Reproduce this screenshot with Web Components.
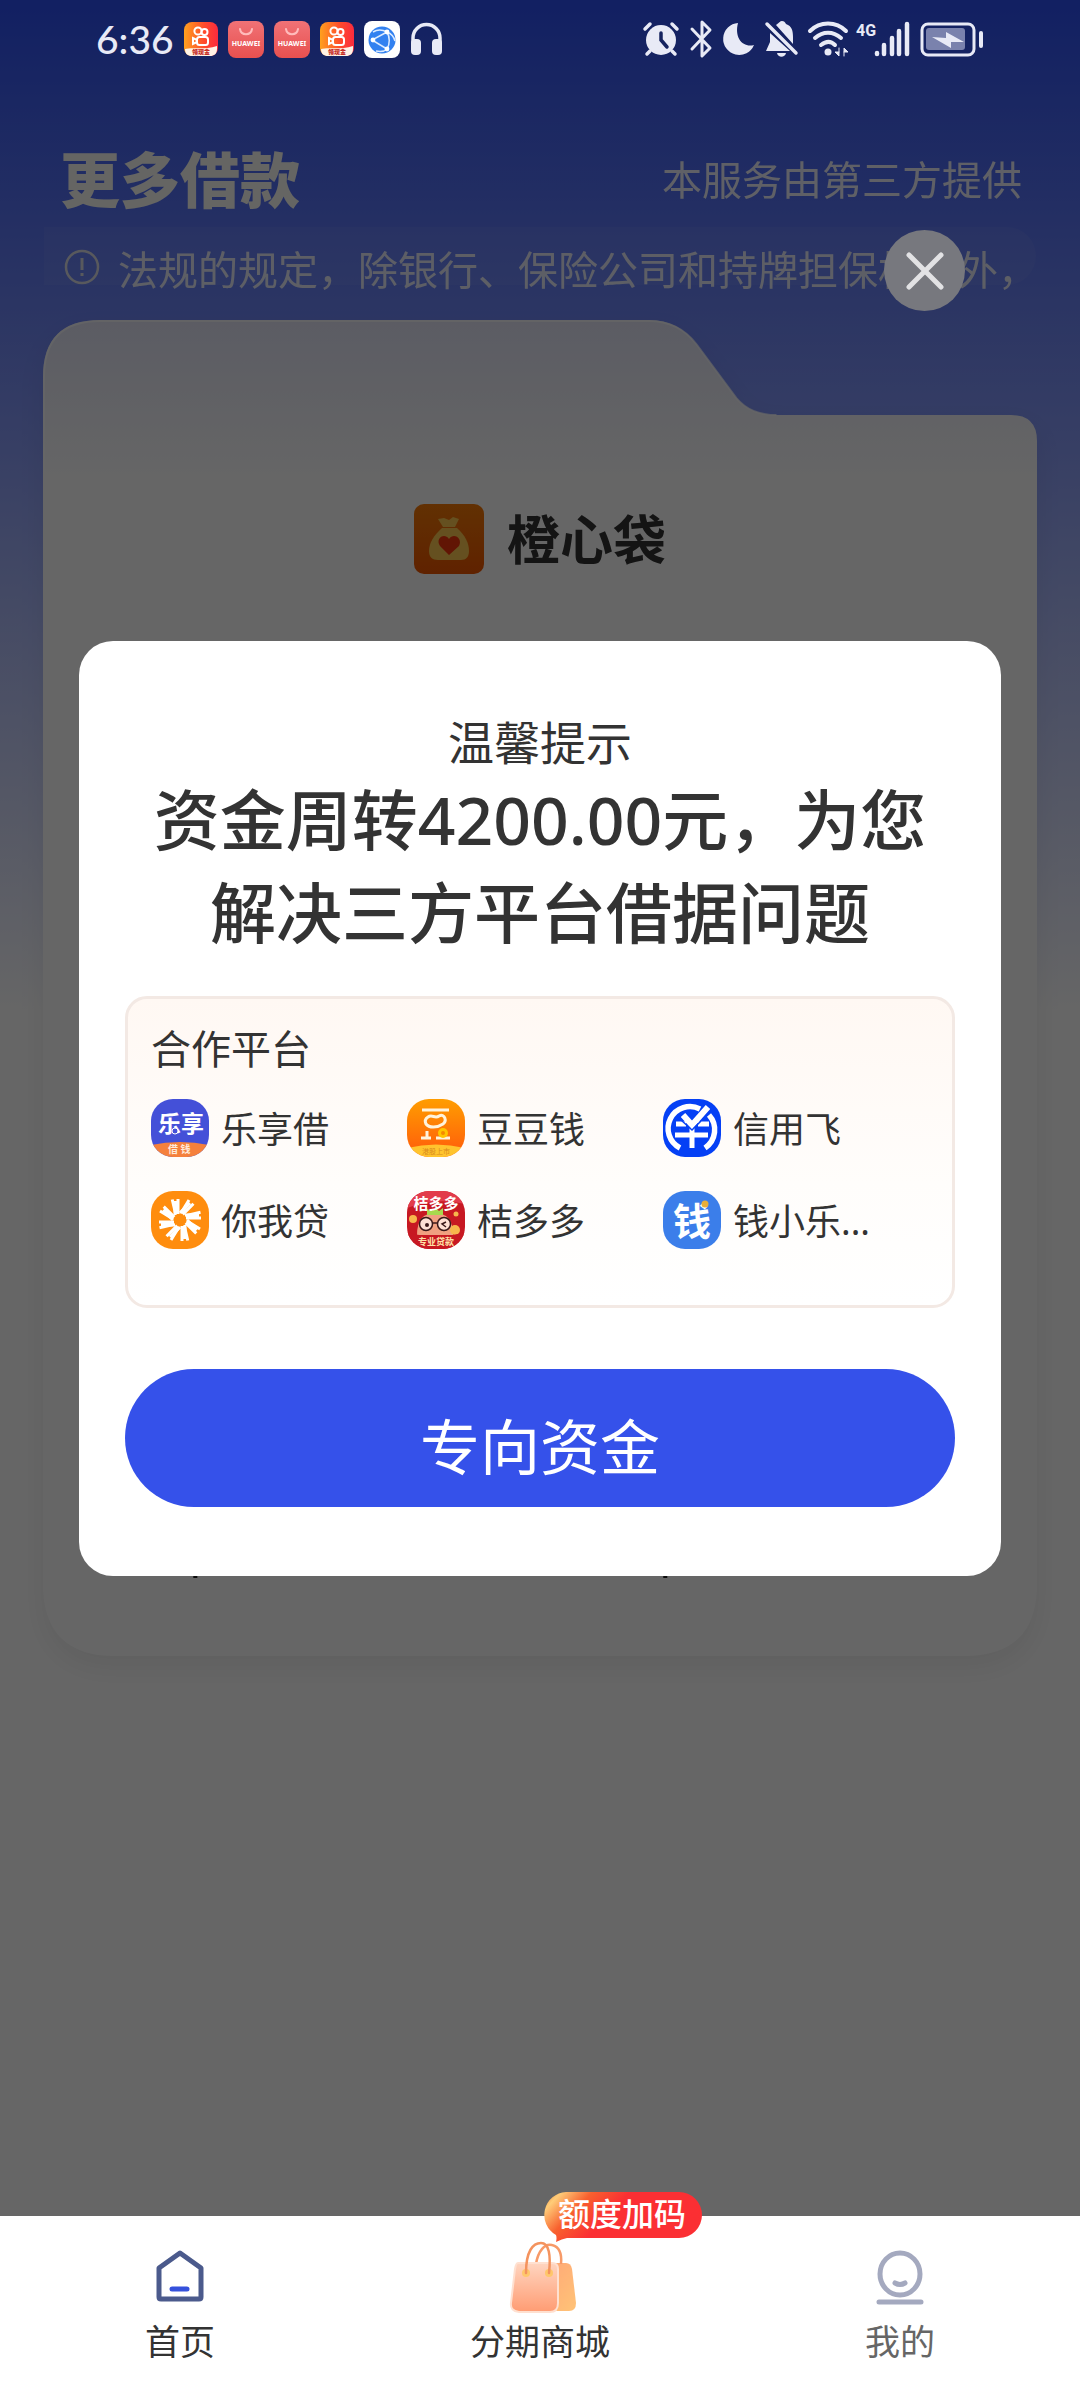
<!DOCTYPE html>
<html lang="zh-CN">
<head>
<meta charset="UTF-8">
<meta name="viewport" content="width=device-width, initial-scale=1">
<title>更多借款</title>
<style>
    body {
        margin: 0;
        font-family: "Noto Sans", "Noto Sans CJK SC", sans-serif;
        color: #333;
    }
</style>
</head>
<body>
<loan-app></loan-app>

<script>
class StatusBar extends HTMLElement {

    constructor() {
        super();
        this.shadowDOM = this.attachShadow({mode: "open"});
    }

    connectedCallback() {
        this.render();
    }

    render() {
        const video = `
        <svg width="34" height="34" viewBox="0 0 34 34">
            <rect width="34" height="34" rx="8" fill="url(#kw)"/>
            <g fill="none" stroke="#fff" stroke-width="2">
                <circle cx="14" cy="9" r="3.6"/><circle cx="20.500" cy="10" r="3"/>
                <rect x="13" y="15" width="11" height="8" rx="2.500"/>
                <path d="M13 18l-4-2v6l4-2"/>
            </g>
            <path d="M1 27c6-2 20 1 32-3v3c0 5-3 7-7 7H8c-4 0-7-2-7-7z" fill="#fff3e6"/>
            <text x="8" y="32" font-size="6" font-weight="900" fill="#c4281c">领现金</text>
        </svg>`;
        const huawei = `
        <svg width="36" height="37" viewBox="0 0 36 37">
            <rect width="36" height="37" rx="8" fill="url(#hw)"/>
            <path d="M12 8c1 7 11 7 12 0" fill="none" stroke="#fbb" stroke-width="2" stroke-linecap="round"/>
            <text x="18" y="25" text-anchor="middle" font-size="7" font-weight="700" fill="#fff">HUAWEI</text>
        </svg>`;
        this.shadowDOM.innerHTML = `
        <style>
        :host {
            display: flex;
            justify-content: space-between;
            align-items: center;
            height: 78px;
            padding: 0 96px;
            position: relative;
            z-index: 3;
            color: #e8eaf6;
        }
        div {
            display: flex;
            align-items: center;
            gap: 10px;
        }
        time {
            font: 500 39px/48px Lato, sans-serif;
        }
        svg {
            display: block;
            overflow: visible;
        }
        </style>
        <svg width="0" height="0" style="position:absolute">
            <defs>
            <linearGradient id="kw"><stop offset="0" stop-color="#ffa01e"/><stop offset=".6" stop-color="#ff4a2c"/><stop offset="1" stop-color="#fb2b3e"/></linearGradient>
            <linearGradient id="hw" x2="0" y2="1"><stop offset="0" stop-color="#f07276"/><stop offset="1" stop-color="#e8504f"/></linearGradient>
            </defs>
        </svg>
        <div>
            <time>6:36</time>
            ${video}${huawei}${huawei}${video}
            <svg width="36" height="37" viewBox="0 0 36 37">
                <rect width="36" height="37" rx="8" fill="#fff"/>
                <circle cx="18" cy="19" r="13.500" fill="#3281f0"/>
                <g fill="none" stroke="#dcebff" stroke-width="1.500"><path d="M23 11L8 19l15 9M23 11c3 5 3 12 0 17M9 11c5-3 10-2 14 0 5 2 7 5 8 9M12 30c5 1 9 0 11-2"/></g>
                <g fill="#fff"><circle cx="23" cy="11" r="2.400"/><circle cx="9" cy="19" r="2.400"/><circle cx="23" cy="28" r="2.400"/></g>
            </svg>
            <svg width="33" height="36" viewBox="0 0 33 36">
                <path d="M3 25v-8a13.500 13.500 0 0 1 27 0v8" fill="none" stroke="currentColor" stroke-width="3.500"/>
                <rect x="1" y="18" width="10" height="16" rx="4" fill="currentColor"/><rect x="22" y="18" width="10" height="16" rx="4" fill="currentColor"/>
            </svg>
        </div>
        <div>
            <svg width="36" height="36" viewBox="0 0 36 36" fill="none" stroke="currentColor" stroke-linecap="round">
                <circle cx="18" cy="19" r="15" fill="currentColor" stroke="none"/>
                <path d="M2 8l5-5M34 8l-5-5M7 30l-3 3M29 30l3 3" stroke-width="3.500"/>
                <path d="M18 12v7l6 7" stroke="#15235f" stroke-width="3.500"/>
            </svg>
            <svg width="24" height="38" viewBox="0 0 24 38" fill="none" stroke="currentColor" stroke-width="3" stroke-linejoin="round" stroke-linecap="round">
                <path d="M3 9l18 19-8 8V2l8 8L3 29"/>
            </svg>
            <svg width="32" height="36" viewBox="0 0 32 36">
                <path d="M15 2A16 16 0 1 0 31 24C20 27 11 17 15 2z" fill="currentColor"/>
            </svg>
            <svg width="33" height="38" viewBox="0 0 33 38">
                <path d="M5 13v9l-4 9h24zM11 5c3-2 4-4 6-4s3 1 4 3c6 2 7 7 7 13v7zM12 33h9c-1 5-8 5-9 0z" fill="currentColor"/>
                <path d="M2 4l29 29" stroke="currentColor" stroke-width="3.500" stroke-linecap="round"/>
            </svg>
            <svg width="102" height="38" viewBox="0 0 102 38" fill="none" stroke="currentColor" stroke-linecap="round">
                <path d="M2 11c10-10 26-10 36 0" stroke-width="4"/>
                <path d="M7 18c8-7 18-7 26 0" stroke-width="4"/>
                <path d="M13 25c5-4 10-4 14 0" stroke-width="4"/>
                <circle cx="20" cy="32" r="3.500" fill="currentColor" stroke="none"/>
                <path d="M31 28v8l-4-4h4M36 36v-8l4 4h-4" stroke-width="1" fill="currentColor"/>
                <text x="48" y="16" font-family="Roboto" font-size="16" font-weight="700" fill="currentColor" stroke="none">4G</text>
                <path d="M69 33v1M76 25v9M84 18v16M91 11v23M99 4v30" stroke-width="4.500"/>
            </svg>
            <svg width="64" height="38" viewBox="0 0 64 38">
                <rect x="2" y="4" width="52" height="31" rx="6" fill="none" stroke="currentColor" stroke-width="3"/>
                <rect x="6" y="8" width="39" height="22" rx="3" fill="#7a82ad"/>
                <path d="M12 17l14 1v-6l18 10-13 0v6z" fill="currentColor"/>
                <rect x="59" y="11" width="4" height="17" rx="2" fill="currentColor"/>
            </svg>
        </div>`;
    }
}

class PageHeader extends HTMLElement {

    constructor() {
        super();
        this.shadowDOM = this.attachShadow({mode: "open"});
    }

    connectedCallback() {
        this.shadowDOM.innerHTML = `
        <style>
        :host {
            display: block;
            padding: 66px 44px 0;
            color: #fff;
        }
        header {
            display: flex;
            justify-content: space-between;
            align-items: center;
            height: 72px;
            padding: 0 14px 0 16px;
        }
        h1 {
            margin: 0;
            font-size: 60px;
            line-height: 72px;
            font-weight: 900;
            color: #fdfdf8;
        }
        header p {
            margin: 0;
            font-size: 40px;
            line-height: 60px;
            opacity: .9;
        }
        .notice {
            display: flex;
            gap: 18px;
            height: 58px;
            margin-top: 11px;
            padding: 0 20px;
            border-radius: 0 29px 29px 0;
            background: rgba(255, 255, 255, .05);
        }
        .notice svg {
            flex: none;
            margin-top: 22px;
        }
        .notice span {
            flex: 1;
            padding-top: 14px;
            font-size: 40px;
            line-height: 58px;
            white-space: nowrap;
            opacity: .85;
        }
        </style>
        <header>
            <h1>更多借款</h1>
            <p>本服务由第三方提供</p>
        </header>
        <div class="notice">
            <svg width="36" height="36" viewBox="0 0 36 36" fill="none" stroke="#dddfe8" stroke-width="2.500">
                <circle cx="18" cy="18" r="16"/><path d="M18 9v12M18 24v3" stroke-width="3"/>
            </svg>
            <span>法规的规定，除银行、保险公司和持牌担保机构外，</span>
        </div>`;
    }
}

class FolderCard extends HTMLElement {

    constructor() {
        super();
        this.shadowDOM = this.attachShadow({mode: "open"});
    }

    connectedCallback() {
        this.shadowDOM.innerHTML = `
        <style>
        :host {
            display: block;
            position: relative;
            box-sizing: border-box;
            margin: 35px 43px 0;
            min-height: 1336px;
            padding-top: 184px;
        }
        .shape {
            position: absolute;
            inset: 0;
            width: 100%;
            height: 100%;
            overflow: visible;
            filter: drop-shadow(0 12px 12px rgba(0, 0, 0, .06));
        }
        .app {
            position: relative;
            display: flex;
            justify-content: center;
            align-items: center;
            gap: 23px;
        }
        h2 {
            margin: 0;
            padding-top: 2px;
            font-size: 53px;
            line-height: 68px;
            font-weight: 700;
            color: #333;
        }
        </style>
        <svg class="shape" viewBox="0 0 992 1335" preserveAspectRatio="none">
            <defs><linearGradient id="g" x2="0" y2="1"><stop offset="0" stop-color="#e4e6f8"/><stop offset=".12" stop-color="#fff"/></linearGradient></defs>
            <path d="M0 57Q0 0 57 0H605Q634 0 652 24L692 78Q706 95 732 95H966Q992 95 992 121V1263Q992 1335 920 1335H72Q0 1335 0 1263Z" fill="url(#g)"/>
            <path d="M1 180V57Q1 1 57 1H605Q634 1 652 24L692 78Q706 95 732 95" fill="none" stroke="#fff" stroke-opacity=".7" stroke-width="2"/>
            <path d="M150 1256h4M619 1256h4" stroke="#222" stroke-width="2"/>
        </svg>
        <div class="app">
            <svg width="70" height="70" viewBox="0 0 70 70">
                <defs><linearGradient id="a" x2="0" y2="1"><stop offset="0" stop-color="#f47a08"/><stop offset="1" stop-color="#ee5500"/></linearGradient></defs>
                <rect width="70" height="70" rx="10" fill="url(#a)"/>
                <path d="M24 15l6-1 5 2 4-3 6 2-4 8H29z" fill="#fcc850"/>
                <path d="M28 24h15c8 7 12 15 12 23 0 6-3 9-8 9H24c-6 0-9-3-9-9 0-8 5-16 13-23z" fill="#fcc850"/>
                <path d="M35 51L26 42c-5-7 4-14 9-7 5-7 14 0 10 7z" fill="#f2350a"/>
            </svg>
            <h2><slot></slot></h2>
        </div>`;
    }
}

/* partner logo plus name, the logo svg comes in through the icon slot */
class PartnerItem extends HTMLElement {

    constructor() {
        super();
        this.shadowDOM = this.attachShadow({mode: "open"});
    }

    connectedCallback() {
        this.shadowDOM.innerHTML = `
        <style>
        :host {
            display: flex;
            align-items: center;
            gap: 12px;
            height: 58px;
            font-size: 36px;
            line-height: 54px;
            white-space: nowrap;
        }
        ::slotted(svg) {
            flex: none;
            width: 58px;
            height: 58px;
            border-radius: 22px;
        }
        span {
            padding-top: 4px;
        }
        </style>
        <slot name="icon"></slot>
        <span><slot></slot></span>`;
    }
}

class TipDialog extends HTMLElement {

    constructor() {
        super();
        this.shadowDOM = this.attachShadow({mode: "open"});
    }

    connectedCallback() {
        // one blade of the pinwheel, turned round the centre
        const blades = [0, 45, 90, 135, 180, 225, 270, 315].map(a =>
            `<path transform="rotate(${a} 29 29)" d="M24 24V10M27 23V8M30 22L38 9" stroke="#fff" stroke-width="3"/>`).join("");

        this.shadowDOM.innerHTML = `
        <style>
        :host {
            position: absolute;
            inset: 0 0 184px;
            z-index: 2;
            display: flex;
            align-items: center;
            background: rgba(0, 0, 0, .6);
        }
        .close {
            position: absolute;
            top: 230px;
            right: 115px;
            width: 81px;
            height: 81px;
            padding: 0;
            border: 0;
            border-radius: 50%;
            background: #77787e;
        }
        .close svg {
            display: block;
            margin: auto;
        }
        section {
            flex: 1;
            margin: 0 79px;
            padding: 70px 46px 69px;
            border-radius: 34px;
            background: #fff;
            text-align: center;
        }
        h3 {
            margin: 0;
            font-size: 46px;
            line-height: 62px;
            font-weight: 400;
        }
        .text {
            margin: 0 0 37px;
            font-size: 66px;
            line-height: 93px;
            font-weight: 500;
        }
        .partners {
            padding: 20px 33px 56px 23px;
            border: 3px solid #f3e9e4;
            border-radius: 22px;
            background: linear-gradient(#fff8f3, #fffdfb 60%, #fff);
            text-align: left;
        }
        h4 {
            margin: 0 0 20px;
            font-size: 40px;
            line-height: 60px;
            font-weight: 400;
        }
        .grid {
            display: grid;
            grid-template-columns: repeat(3, 1fr);
            row-gap: 34px;
        }
        .go {
            display: block;
            width: 100%;
            height: 138px;
            margin-top: 61px;
            padding: 18px 0 0;
            border: 0;
            border-radius: 69px;
            background: #3551ea;
            color: #fff;
            font-family: inherit;
            font-size: 60px;
            line-height: 80px;
        }
        </style>
        <button class="close" aria-label="关闭">
            <svg width="40" height="40" viewBox="0 0 40 40" stroke="#e2e2e4" stroke-width="5" stroke-linecap="round"><path d="M4 4l32 32M36 4L4 36"/></svg>
        </button>
        <section role="dialog">
            <h3>温馨提示</h3>
            <p class="text">资金周转4200.00元，为您解决三方平台借据问题</p>
            <div class="partners">
                <h4>合作平台</h4>
                <div class="grid">
                    <partner-item>
                        <svg slot="icon" viewBox="0 0 58 58">
                            <rect width="58" height="58" fill="#4450d8"/>
                            <path d="M0 46q29-6 58 0v12H0z" fill="#f5803c"/>
                            <text x="30" y="33" text-anchor="middle" font-size="23" font-weight="700" fill="#fff">乐享</text>
                            <circle cx="24" cy="32" r="3" fill="#4450d8" stroke="#fff"/>
                            <text x="17" y="54" font-size="10" font-weight="700" fill="#ffe9da">借 钱</text>
                        </svg>乐享借
                    </partner-item>
                    <partner-item>
                        <svg slot="icon" viewBox="0 0 58 58">
                            <defs><linearGradient id="o" x2="0" y2="1"><stop offset="0" stop-color="#ff9d00"/><stop offset="1" stop-color="#ff5a0c"/></linearGradient></defs>
                            <rect width="58" height="58" fill="url(#o)"/>
                            <path d="M0 49q29-7 58 0v9H0z" fill="#ffc42e"/>
                            <g fill="none" stroke="#fff3dc" stroke-width="3"><path d="M15 11h27M14 39h10M20 32v7M29 39h14"/><path d="M21 18c4-3 7 2 11-1 6-3 8 5 4 8-6 4-14 4-17 0-1-2-1-5 2-7z"/></g>
                            <circle cx="36" cy="34" r="3.500" fill="#f58a00" stroke="#ffc400" stroke-width="3"/>
                            <text x="29" y="55" text-anchor="middle" font-size="7" fill="#d98a1c">港股上市</text>
                        </svg>豆豆钱
                    </partner-item>
                    <partner-item>
                        <svg slot="icon" viewBox="0 0 58 58">
                            <rect width="58" height="58" fill="#0540f5"/>
                            <g fill="none" stroke="#fff">
                                <path d="M17 49A21.500 21.500 0 0 1 37 10M46 16A22 22 0 0 1 42 49" stroke-width="5.500"/>
                                <path d="M13 25h10M35 25h11M12 36h33M29 29v20" stroke-width="5"/>
                                <path d="M20 16l9 10L45 8" stroke-width="6"/>
                            </g>
                            <path d="M18 21l11 10 9-9" fill="none" stroke="#0540f5" stroke-width="1.500"/>
                        </svg>信用飞
                    </partner-item>
                    <partner-item>
                        <svg slot="icon" viewBox="0 0 58 58">
                            <rect width="58" height="58" fill="#ff8d0e"/>
                            ${blades}
                            <path d="M29 23l2 4 4 2-4 2-2 4-2-4-4-2 4-2z" fill="#ff8d0e"/>
                        </svg>你我贷
                    </partner-item>
                    <partner-item>
                        <svg slot="icon" viewBox="0 0 58 58">
                            <rect width="58" height="58" fill="#c71822"/>
                            <path d="M0 0h58v13q-29-7-58 4z" fill="#e23b4b"/>
                            <path d="M10 44q0-22 18-22t18 22z" fill="#f0a080"/>
                            <path d="M20 18l5 2 4-3 3 3 4-3v7H20z" fill="#a8d84e"/>
                            <circle cx="6" cy="28" r="4" fill="#f7b64c"/><circle cx="48" cy="39" r="5" fill="#f7b64c"/><circle cx="49" cy="23" r="2.500" fill="#f7b64c"/>
                            <g fill="#fde0d4" stroke="#3a1a1a" stroke-width="1.500"><circle cx="19" cy="33" r="6.500"/><circle cx="37" cy="33" r="6.500"/><path d="M25 32h6"/></g>
                            <circle cx="20" cy="34" r="2" fill="#3a1a1a"/><path d="M39 31l-4 2 4 3" fill="none" stroke="#3a1a1a" stroke-width="1.500"/>
                            <path d="M0 41q29 9 58 0v17H0z" fill="#c71822"/>
                            <text x="29" y="18" text-anchor="middle" font-size="15" font-weight="700" fill="#fff">桔多多</text>
                            <text x="29" y="54" text-anchor="middle" font-size="9" font-weight="700" fill="#ffe2a8">专业贷款</text>
                        </svg>桔多多
                    </partner-item>
                    <partner-item>
                        <svg slot="icon" viewBox="0 0 58 58">
                            <rect width="58" height="58" fill="#3b7eea"/>
                            <text x="29" y="44" text-anchor="middle" font-size="38" font-weight="700" fill="#fff">钱</text>
                            <circle cx="42" cy="13" r="3.500" fill="#e8ae3a"/>
                        </svg>钱小乐...
                    </partner-item>
                </div>
            </div>
            <button class="go">专向资金</button>
        </section>`;
    }
}

class TabBar extends HTMLElement {

    constructor() {
        super();
        this.shadowDOM = this.attachShadow({mode: "open"});
    }

    connectedCallback() {
        this.shadowDOM.innerHTML = `
        <style>
        :host {
            display: block;
            position: relative;
            z-index: 3;
            margin-top: auto;
            background: #fff;
        }
        nav {
            display: grid;
            grid-template-columns: repeat(3, 1fr);
            height: 184px;
        }
        a {
            position: relative;
            display: flex;
            flex-direction: column;
            align-items: center;
            padding-top: 24px;
            color: #333;
            font-size: 35px;
            line-height: 52px;
            text-decoration: none;
        }
        a.mine {
            color: #666;
        }
        a > svg {
            display: block;
        }
        .badge {
            position: absolute;
            left: calc(50% + 3px);
            top: -24px;
            width: 159px;
            height: 50px;
        }
        .badge span {
            position: relative;
            display: block;
            padding-left: 15px;
            font-size: 32px;
            line-height: 44px;
            font-weight: 500;
            color: #fff;
        }
        .badge svg {
            position: absolute;
            inset: 0;
        }
        </style>
        <nav>
            <a href="#home">
                <svg width="76" height="76" viewBox="0 0 76 76" fill="none" stroke-width="5" stroke-linecap="round" stroke-linejoin="round">
                    <path d="M38 13L17 28v29q0 2 2 2h38q2 0 2-2V28z" stroke="#4b5a8c"/>
                    <path d="M30 49h15" stroke="#3551dc"/>
                </svg>
                首页
            </a>
            <a href="#mall">
                <svg width="76" height="76" viewBox="0 0 76 76" fill="none">
                    <defs>
                        <linearGradient id="f" x2="0" y2="1"><stop offset="0" stop-color="#ffd5c0"/><stop offset="1" stop-color="#ff9c73"/></linearGradient>
                        <linearGradient id="b" x2="1" y2="1"><stop offset="0" stop-color="#ffa477"/><stop offset="1" stop-color="#ffc377"/></linearGradient>
                    </defs>
                    <path d="M38 23h26q5 0 6 6l4 34q0 8-7 8H36z" fill="url(#b)"/>
                    <path d="M34 24c2-13 9-21 16-19 8 2 10 9 9 19" stroke="#f79a68" stroke-width="2.500"/>
                    <path d="M16 23h34q6 0 6 6v34q0 9-8 9H17q-9-1-8-9l4-34q1-6 3-6z" fill="url(#f)" stroke="#ffe0d0" stroke-width="2"/>
                    <circle cx="24" cy="33" r="4" fill="#ffc76b"/><circle cx="47" cy="33" r="4" fill="#ffc76b"/>
                    <path d="M24 33C24 11 31 3 39 3s10 12 8 30" stroke="#f4935e" stroke-width="2.500" stroke-linecap="round"/>
                </svg>
                分期商城
                <div class="badge">
                    <svg width="159" height="50" viewBox="0 0 159 50">
                        <defs><linearGradient id="r" y2=".3"><stop offset="0" stop-color="#f0863c"/><stop offset=".1" stop-color="#ffcc78"/><stop offset=".28" stop-color="#f8602e"/><stop offset=".5" stop-color="#fb2f33"/></linearGradient></defs>
                        <path d="M23 0H136a23 23 0 0 1 0 46H24q-5 1-11 4 1-4 0-7A23 23 0 0 1 23 0z" fill="url(#r)"/>
                    </svg>
                    <span>额度加码</span>
                </div>
            </a>
            <a href="#mine" class="mine">
                <svg width="76" height="76" viewBox="0 0 76 76" fill="none" stroke="#a4a9bf" stroke-width="5" stroke-linecap="round">
                    <ellipse cx="38" cy="34" rx="20" ry="21"/>
                    <path d="M33 43q5 3 10 0M17 62h42"/>
                </svg>
                我的
            </a>
        </nav>`;
    }
}

class LoanApp extends HTMLElement {

    constructor() {
        super();
        this.shadowDOM = this.attachShadow({mode: "open"});
    }

    connectedCallback() {
        this.shadowDOM.innerHTML = `
        <style>
        :host {
            display: flex;
            flex-direction: column;
            position: relative;
            min-height: 100vh;
            background: linear-gradient(#2d50f5, #fff 1010px);
        }
        </style>
        <status-bar></status-bar>
        <page-header></page-header>
        <folder-card>橙心袋</folder-card>
        <tip-dialog></tip-dialog>
        <tab-bar></tab-bar>`;
    }
}

customElements.define("status-bar", StatusBar);
customElements.define("page-header", PageHeader);
customElements.define("folder-card", FolderCard);
customElements.define("partner-item", PartnerItem);
customElements.define("tip-dialog", TipDialog);
customElements.define("tab-bar", TabBar);
customElements.define("loan-app", LoanApp);
</script>
</body>
</html>
